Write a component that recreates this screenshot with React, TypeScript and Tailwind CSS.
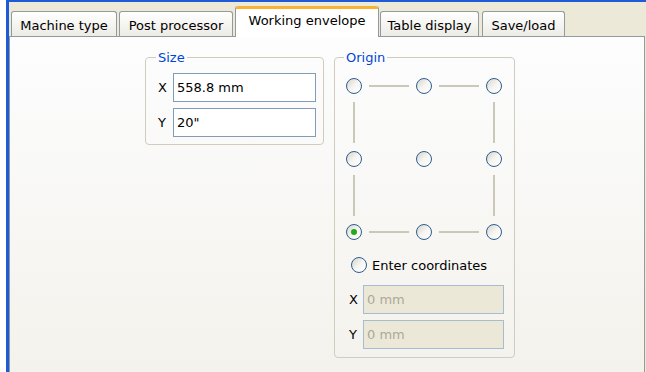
import React from "react";

function Radio({ checked = false }: { checked?: boolean }) {
  return (
    <span className="flex h-[16px] w-[16px] shrink-0 items-center justify-center rounded-full border border-[#2C5D8F] bg-gradient-to-br from-[#D6D3C9] via-[#F6F5F1] to-white">
      {checked && <span className="h-[6px] w-[6px] rounded-full bg-[#22A822]" />}
    </span>
  );
}

function HLine() {
  return (
    <div className="flex items-center px-[7px]">
      <div className="h-[2px] w-full bg-[#CCC8B9]" />
    </div>
  );
}

function VLine() {
  return (
    <div className="flex justify-center py-[8px]">
      <div className="h-full w-[2px] bg-[#CCC8B9]" />
    </div>
  );
}

const tabs = [
  { label: "Machine type", w: "w-[106px]", ml: "ml-0" },
  { label: "Post processor", w: "w-[114px]", ml: "ml-[2px]" },
  { label: "Working envelope", w: "w-[144px]", ml: "ml-[2px]", active: true },
  { label: "Table display", w: "w-[99px]", ml: "ml-[1px]" },
  { label: "Save/load", w: "w-[83px]", ml: "ml-[3px]" },
];

export default function App() {
  return (
    <div
      className="flex h-[372px] w-[646px] overflow-hidden bg-white text-[13px] text-black"
      style={{ fontFamily: '"DejaVu Sans", sans-serif' }}
    >
      <div className="ml-[6px] flex flex-1 flex-col border-l-[3px] border-t-2 border-[#1F5BD6] bg-[#ECE9D8]">
        {/* tab strip */}
        <div className="flex h-[34px] items-end pl-[2px]">
          {tabs.map((t) =>
            t.active ? (
              <div
                key={t.label}
                className={`relative z-10 -mb-px flex h-[31px] ${t.w} ${t.ml} flex-col overflow-hidden rounded-t-[3px] border-x border-[#919B9C] bg-white`}
              >
                <div className="h-[3px] bg-[#F8B335]" />
                <div className="flex flex-1 items-center justify-center pb-[5px] leading-[15px]">{t.label}</div>
              </div>
            ) : (
              <div
                key={t.label}
                className={`flex h-[25px] ${t.w} ${t.ml} items-center justify-center rounded-t-[3px] border border-b-0 border-[#919B9C] bg-gradient-to-b from-white to-[#ECEBE5] pt-[2px] leading-[15px]`}
              >
                {t.label}
              </div>
            )
          )}
        </div>

        {/* page */}
        <div className="mr-[1px] flex flex-1 items-start gap-[10px] border border-b-0 border-[#919B9C] bg-gradient-to-b from-[#FDFDFE] to-[#F3F2EC] pl-[135px] pt-[13px]">
          {/* Size */}
          <fieldset className="w-[179px] rounded-[4px] border border-[#D0CDBE] px-0 pb-[7px]">
            <legend className="ml-[10px] px-[2px] leading-[15px] text-[#0046D5]">Size</legend>
            <div className="mt-[8px] flex flex-col gap-[6px] pl-[12px] pr-[7px]">
              <div className="flex items-center">
                <span className="w-[15px]">X</span>
                <div className="flex h-[29px] flex-1 items-center border border-[#7F9DB9] bg-white pl-[3px]">558.8 mm</div>
              </div>
              <div className="flex items-center">
                <span className="w-[15px]">Y</span>
                <div className="flex h-[29px] flex-1 items-center border border-[#7F9DB9] bg-white pl-[3px]">20"</div>
              </div>
            </div>
          </fieldset>

          {/* Origin */}
          <fieldset className="w-[181px] rounded-[4px] border border-[#D0CDBE] pb-[8px]">
            <legend className="ml-[9px] px-[2px] leading-[15px] text-[#0046D5]">Origin</legend>
            <div className="mt-[13px] pl-[11px]">
              <div className="grid grid-cols-[16px_54px_16px_54px_16px] grid-rows-[16px_57px_16px_57px_16px]">
                <Radio />
                <HLine />
                <Radio />
                <HLine />
                <Radio />

                <VLine />
                <div />
                <div />
                <div />
                <VLine />

                <Radio />
                <div />
                <Radio />
                <div />
                <Radio />

                <VLine />
                <div />
                <div />
                <div />
                <VLine />

                <Radio checked />
                <HLine />
                <Radio />
                <HLine />
                <Radio />
              </div>
            </div>
            <div className="mt-[17px] flex items-center gap-[5px] pl-[16px]">
              <Radio />
              <span className="leading-[15px]">Enter coordinates</span>
            </div>
            <div className="mt-[12px] flex flex-col gap-[6px] pl-[14px] pr-[10px]">
              <div className="flex items-center">
                <span className="w-[14px]">X</span>
                <div className="flex h-[29px] flex-1 items-center border border-[#A5BCD3] bg-[#EBE8D8] pl-[3px] text-[#ACA899]">0 mm</div>
              </div>
              <div className="flex items-center">
                <span className="w-[14px]">Y</span>
                <div className="flex h-[29px] flex-1 items-center border border-[#A5BCD3] bg-[#EBE8D8] pl-[3px] text-[#ACA899]">0 mm</div>
              </div>
            </div>
          </fieldset>
        </div>
      </div>
    </div>
  );
}
